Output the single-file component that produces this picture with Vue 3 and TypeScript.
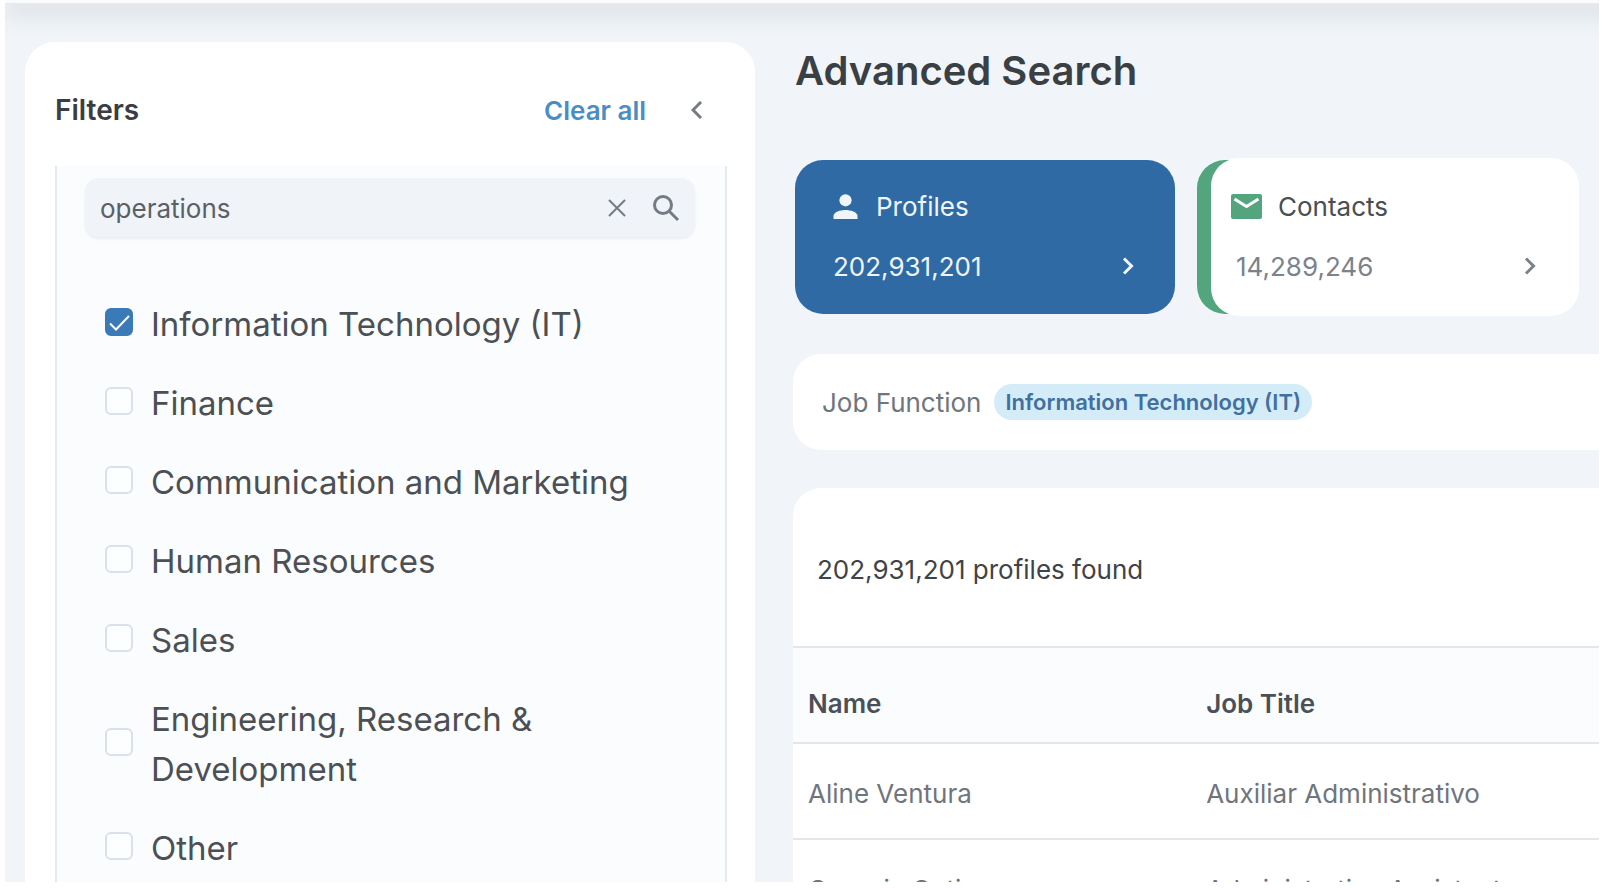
<script setup lang="ts">
import { ref } from 'vue'

interface Option {
  label: string
  checked: boolean
}

interface Profile {
  name: string
  title: string
}

const query = ref('operations')

const options = ref<Option[]>([
  { label: 'Information Technology (IT)', checked: true },
  { label: 'Finance', checked: false },
  { label: 'Communication and Marketing', checked: false },
  { label: 'Human Resources', checked: false },
  { label: 'Sales', checked: false },
  { label: 'Engineering, Research & Development', checked: false },
  { label: 'Other', checked: false },
])

const profiles: Profile[] = [
  { name: 'Aline Ventura', title: 'Auxiliar Administrativo' },
  { name: 'Georgia Gutierrez', title: 'Administrative Assistant' },
]

function clearAll(): void {
  query.value = ''
  options.value.forEach((o) => (o.checked = false))
}
</script>

<template>
  <div class="frame">
    <div class="page">
      <div class="topbar"></div>
      <div class="columns">
        <aside class="sidebar">
          <header class="sidebar-head">
            <h2>Filters</h2>
            <button type="button" class="clear-all" @click="clearAll">Clear all</button>
            <button type="button" class="icon-button" aria-label="Collapse filters">
              <svg width="12" height="18" viewBox="0 0 12 18"><path d="M10 1 2 9 10 17" /></svg>
            </button>
          </header>
          <div class="panel">
            <div class="search">
              <input v-model="query" type="text" aria-label="Search job functions" />
              <button type="button" class="icon-button" aria-label="Clear search" @click="query = ''">
                <svg class="thin" width="18" height="18" viewBox="0 0 18 18"><path d="M1 1 17 17M17 1 1 17" /></svg>
              </button>
              <button type="button" class="icon-button" aria-label="Search">
                <svg width="28" height="28" viewBox="0 0 28 28"><circle cx="11" cy="11" r="8.5" /><path d="M17 17 26 26" /></svg>
              </button>
            </div>
            <div class="options">
              <label v-for="option in options" :key="option.label" class="option">
                <input v-model="option.checked" type="checkbox" />
                <svg v-if="option.checked" class="tick" width="28" height="28" viewBox="0 0 28 28"><path d="M5 15.5 11 21.5 24 8" /></svg>
                <span>{{ option.label }}</span>
              </label>
            </div>
          </div>
        </aside>

        <main class="main">
          <h1>Advanced Search</h1>
          <div class="cards">
            <button type="button" class="card profiles">
              <span class="card-head">
                <svg width="25" height="25" viewBox="0 0 25 25"><circle cx="12.5" cy="6.3" r="6.1" /><path d="M0.5 25v-3c0-4 7-6 12-6s12 2 12 6v3z" /></svg>
                Profiles
              </span>
              <span class="card-count">
                202,931,201
                <svg width="12" height="18" viewBox="0 0 12 18"><path d="M2 1.5 9.5 9 2 16.5" /></svg>
              </span>
            </button>
            <button type="button" class="card contacts">
              <span class="card-body">
                <span class="card-head">
                  <svg width="31" height="25" viewBox="0 0 31 25"><rect width="31" height="25" rx="2" /><path class="flap" d="M3.5 5 15.5 12.5 27.5 5" /></svg>
                  Contacts
                </span>
                <span class="card-count">
                  14,289,246
                  <svg width="12" height="18" viewBox="0 0 12 18"><path d="M2 1.5 9.5 9 2 16.5" /></svg>
                </span>
              </span>
            </button>
          </div>

          <section class="applied">
            <span>Job Function</span>
            <span class="chip">Information Technology (IT)</span>
          </section>

          <section class="results">
            <p>202,931,201 profiles found</p>
            <table>
              <thead>
                <tr><th scope="col">Name</th><th scope="col">Job Title</th></tr>
              </thead>
              <tbody>
                <tr v-for="profile in profiles" :key="profile.name">
                  <td>{{ profile.name }}</td>
                  <td>{{ profile.title }}</td>
                </tr>
              </tbody>
            </table>
          </section>
        </main>
      </div>
    </div>
  </div>
</template>

<style>
body {
  margin: 0;
  background: #ffffff;
}
</style>

<style scoped>
* {
  box-sizing: border-box;
}

.frame {
  height: 100vh;
  padding: 0 7px 6px 5px;
  overflow: hidden;
  font-family: Inter, "Liberation Sans", sans-serif;
  font-size: 26px;
  color: #6f757d;
}

.page {
  height: 100%;
  display: flex;
  flex-direction: column;
  overflow: hidden;
  background: #f1f5fa;
}

.topbar {
  flex: none;
  height: 4px;
  margin-right: -32px;
  background: #fafbfc;
  border-bottom: 1px solid #e8ebee;
  box-shadow: 0 4px 26px 2px rgba(60, 64, 60, 0.28);
}

.columns {
  flex: 1;
  min-height: 0;
  display: grid;
  grid-template-columns: 365fr 403fr;
  gap: 38px;
  padding: 38px 0 0 20px;
}

button {
  font: inherit;
  color: inherit;
  background: none;
  border: 0;
  padding: 0;
  cursor: pointer;
}

svg {
  flex: none;
  display: block;
  fill: none;
  stroke: currentColor;
  stroke-width: 3;
}

h1,
h2,
p {
  margin: 0;
}

.sidebar {
  position: relative;
  min-height: 0;
  display: flex;
  flex-direction: column;
  padding: 0 28px 0 30px;
  background: #ffffff;
  border-radius: 30px 30px 0 0;
}

.sidebar-head {
  flex: none;
  display: flex;
  align-items: center;
  height: 124px;
  padding: 12px 24px 0 0;
}

h2 {
  flex: 1;
  font-size: 28px;
  font-weight: 600;
  color: #3a3e42;
}

.clear-all {
  margin-right: 45px;
  font-weight: 600;
  color: #4a8cc5;
}

.icon-button {
  color: #757b83;
}

.thin {
  stroke-width: 2;
}

.panel {
  flex: 1;
  min-height: 0;
  display: flex;
  flex-direction: column;
  padding: 12px 30px 22px 28px;
  background: #fbfcfe;
  border: solid #e4eaf1;
  border-width: 0 2px;
}

.search {
  flex: none;
  display: flex;
  align-items: center;
  gap: 26px;
  height: 59px;
  padding: 0 15px;
  background: #f0f3f8;
  border-radius: 14px;
  box-shadow: 0 2px 3px rgba(60, 64, 67, 0.08);
}

.search input {
  flex: 1;
  min-width: 0;
  padding: 2px 0 0;
  font: inherit;
  color: #5b6067;
  background: none;
  border: 0;
  outline: 0;
}

.options {
  flex: 1;
  min-height: 0;
  display: flex;
  flex-direction: column;
  gap: 29px;
  padding: 62px 60px 0 20px;
  overflow: hidden;
}

.option {
  position: relative;
  flex: none;
  display: flex;
  align-items: center;
  gap: 18px;
  font-size: 33px;
  line-height: 50px;
  color: #4c5055;
}

.option input {
  flex: none;
  appearance: none;
  width: 28px;
  height: 28px;
  margin: 0 0 4px;
  background: #fdfeff;
  border: 2px solid #dae1ea;
  border-radius: 6px;
}

.option input:checked {
  background: #3a7ab7;
  border-color: #3a7ab7;
}

.tick {
  position: absolute;
  left: 0;
  top: calc(50% - 16px);
  stroke: #ffffff;
  stroke-width: 2;
}

.main {
  min-width: 0;
  display: flex;
  flex-direction: column;
}

h1 {
  margin-left: 2px;
  padding-top: 4px;
  font-size: 40px;
  line-height: 50px;
  font-weight: 600;
  color: #3a3f44;
}

.cards {
  display: grid;
  grid-template-columns: 380px 382px;
  gap: 22px;
  margin: 62px 0 38px 2px;
}

.card {
  position: relative;
  height: 158px;
  text-align: left;
}

.profiles {
  height: 154px;
  margin-top: 2px;
  padding: 16px 41px 18px 38px;
  background: #2f6aa5;
  border-radius: 28px;
  color: #f0f5fa;
}

.card-head,
.card-count {
  display: flex;
  align-items: center;
  height: 60px;
}

.card-head svg {
  fill: currentColor;
  stroke: none;
}

.profiles .card-head {
  gap: 18px;
}

.card-count {
  justify-content: space-between;
}

.contacts::before {
  content: "";
  position: absolute;
  inset: 2px auto 2px 0;
  width: 80px;
  background: #53a57d;
  border-radius: 28px;
}

.card-body {
  position: relative;
  display: block;
  height: 100%;
  margin-left: 14px;
  padding: 18px 43px 20px 20px;
  background: #ffffff;
  border-radius: 28px;
}

.contacts .card-head {
  gap: 16px;
  color: #4a4d51;
}

.contacts .card-head svg {
  fill: #53a57d;
}

.contacts .card-head .flap {
  fill: none;
  stroke: #ffffff;
  stroke-width: 3;
}

.contacts .card-count {
  padding-left: 5px;
  color: #7c828a;
}

.applied {
  flex: none;
  display: flex;
  align-items: center;
  gap: 13px;
  height: 96px;
  padding-left: 29px;
  background: #ffffff;
  border-radius: 28px 0 0 28px;
}

.chip {
  padding: 0 11px;
  font-size: 22px;
  line-height: 36px;
  font-weight: 600;
  color: #41709f;
  background: #d3ecf8;
  border-radius: 18px;
}

.results {
  flex: 1;
  min-height: 0;
  margin-top: 38px;
  overflow: hidden;
  background: #ffffff;
  border-radius: 28px 0 0 0;
}

.results p {
  height: 158px;
  padding: 3px 0 0 24px;
  line-height: 158px;
  color: #3f4347;
}

table {
  width: 100%;
  border-collapse: collapse;
  table-layout: fixed;
}

th,
td {
  height: 96px;
  padding: 4px 0 0 15px;
  text-align: left;
  border-bottom: 2px solid #e4e6e9;
}

th {
  padding-top: 16px;
  font-weight: 600;
  color: #4b5056;
  background: #fbfcfe;
  border-top: 2px solid #e4e6e9;
}

th:first-child {
  width: 49.4%;
}
</style>
